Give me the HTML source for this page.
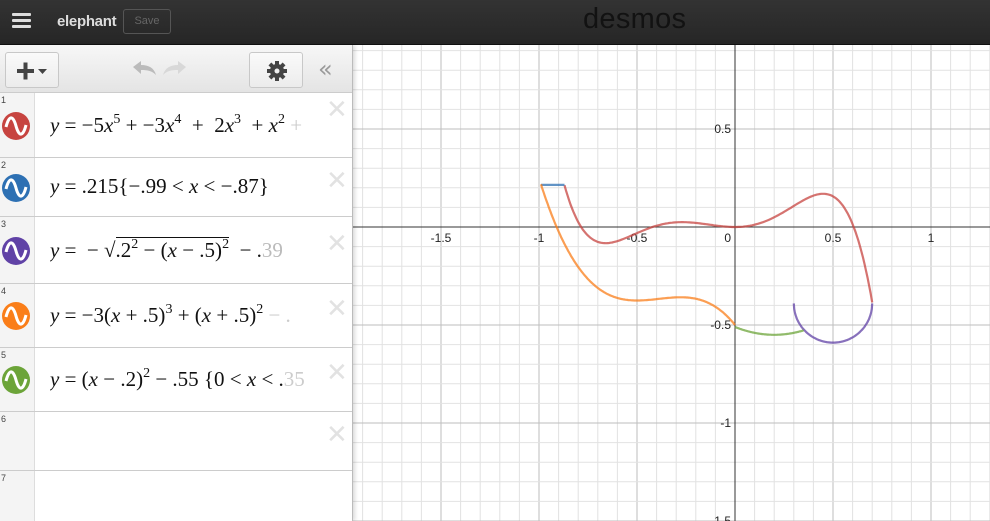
<!DOCTYPE html>
<html><head><meta charset="utf-8"><style>
*{margin:0;padding:0;box-sizing:border-box}
body{width:990px;height:521px;overflow:hidden;background:#fff;font-family:"Liberation Sans",sans-serif;position:relative}
#top{position:absolute;left:0;top:0;width:990px;height:45px;background:linear-gradient(#333,#262626);border-bottom:1px solid #111}
.hb{position:absolute;left:12px;width:19px;height:3px;background:#ddd;border-radius:1px}
#title{position:absolute;left:57px;top:13px;color:#ddd;font-size:15px;font-weight:bold;letter-spacing:-0.3px}
#save{position:absolute;left:123px;top:9px;width:48px;height:25px;border:1px solid #555;border-radius:3px;color:#666;font-size:11px;text-align:center;line-height:23px}
#logo{position:absolute;left:583px;top:3px;font-size:29px;color:#121212;letter-spacing:0.3px}
#panel{position:absolute;left:0;top:45px;width:353px;height:476px;background:#fff;border-right:1px solid #bbb;box-shadow:2px 0 4px rgba(0,0,0,.15);z-index:2;overflow:hidden}
#tb{position:absolute;left:0;top:0;width:352px;height:48px;background:linear-gradient(#f7f7f7,#e4e4e4);border-bottom:1px solid #ccc}
.btn{position:absolute;top:7px;height:36px;border:1px solid #c8c8c8;border-radius:3px;background:linear-gradient(#fafafa,#ececec)}
.row{position:absolute;left:0;width:352px;border-bottom:1px solid #ccc}
.num{position:absolute;left:0;top:0;width:35px;height:100%;background:#f4f4f4;border-right:1px solid #ddd;font-size:9px;color:#444;padding:2px 0 0 1px}
.ic{position:absolute;left:2px;width:28px;height:28px;border-radius:50%}
.ex{position:absolute;left:50px;font-family:"Liberation Serif",serif;font-size:21px;color:#111;white-space:nowrap;width:272px;overflow:hidden}
.ex i{font-style:italic}
.ex sup{font-size:14px;vertical-align:9px}
.x{position:absolute;left:326px;font-size:26px;color:#e2e2e2;font-family:"DejaVu Sans",sans-serif}
#graph{position:absolute;left:0;top:0}
.lab{font-family:"Liberation Sans",sans-serif;font-size:12px;fill:#222}
</style></head><body>
<svg id="graph" width="990" height="521"></svg>
<div id="top">
<div class="hb" style="top:13px"></div><div class="hb" style="top:19px"></div><div class="hb" style="top:25px"></div>
<div id="title">elephant</div><div id="save">Save</div>
<div id="logo">desmos</div>
</div>
<div id="panel">
<div id="tb">
<div class="btn" style="left:5px;width:54px"><svg width="54" height="36"><rect x="11" y="16" width="17" height="4" fill="#444"/><rect x="17.5" y="9.5" width="4" height="17" fill="#444"/><path d="M32 16h9l-4.5 5z" fill="#444"/></svg></div>
<svg style="position:absolute;left:128px;top:12px" width="64" height="24"><path d="M5 10 l8 -6 v4 c8 0 13 3 15 10 c-4 -4 -8 -5 -15 -5 v4z" fill="#bbb"/><path d="M58 10 l-8 -6 v4 c-8 0 -13 3 -15 10 c4 -4 8 -5 15 -5 v4z" fill="#d8d8d8"/></svg>
<div class="btn" style="left:249px;width:54px"><svg width="54" height="36"><g transform="translate(27,18)" fill="#444"><circle r="7"/><g><rect x="-2" y="-10" width="4" height="20"/><rect x="-10" y="-2" width="20" height="4"/><rect x="-2" y="-10" width="4" height="20" transform="rotate(45)"/><rect x="-2" y="-10" width="4" height="20" transform="rotate(-45)"/></g><circle r="2.5" fill="#f0f0f0"/></g></svg></div>
<div style="position:absolute;left:318px;top:10px;font-size:24px;color:#999;font-family:'DejaVu Sans',sans-serif">«</div>
</div>
</div>
<script>
var P=document.getElementById('panel');
var rows=[[48,65,'#c74440','<i>y</i> = −5<i>x</i><sup>5</sup> + −3<i>x</i><sup>4</sup> &nbsp;+ &nbsp;2<i>x</i><sup>3</sup> &nbsp;+ <i>x</i><sup>2</sup> <span style="color:#ccc">+</span>'],
[113,59,'#2d70b3','<i>y</i> = .215{−.99 &lt; <i>x</i> &lt; −.87}'],
[172,67,'#6042a6','<i>y</i> = &nbsp;− √<span style="border-top:1px solid #111">.2<sup>2</sup> − (<i>x</i> − .5)<sup>2</sup></span> &nbsp;− .<span style="color:#bbb">39</span>'],
[239,64,'#fa7e19','<i>y</i> = −3(<i>x</i> + .5)<sup>3</sup> + (<i>x</i> + .5)<sup>2</sup> <span style="color:#ccc">− .</span>'],
[303,64,'#6ca439','<i>y</i> = (<i>x</i> − .2)<sup>2</sup> − .55 {0 &lt; <i>x</i> &lt; .<span style="color:#ccc">35</span>'],
[367,59,null,''],[426,60,null,'']];
var h='';
rows.forEach(function(r,i){
 h+='<div class="row" style="top:'+r[0]+'px;height:'+r[1]+'px"><div class="num">'+(i+1)+'</div>';
 if(r[2]){var cy=(r[1]/2-14);h+='<div class="ic" style="top:'+cy+'px;background:'+r[2]+'"><svg width="28" height="28"><path d="M4 15 C7 3 11 3 14 14 C17 25 21 25 24 13" stroke="#fff" stroke-width="3" fill="none"/></svg></div>';
 h+='<div class="ex" style="top:'+(r[1]/2-14)+'px">'+r[3]+'</div>';}
 if(i<6)h+='<div class="x" style="top:'+(i==0?2:(r[1]/2-22))+'px">✕</div>';
 h+='</div>';
});
P.insertAdjacentHTML('beforeend',h);
var S=document.getElementById('graph'),g='';
var ox=735,oy=227,u=196;
function X(x){return ox+u*x}function Y(y){return oy-u*y}
for(var k=-20;k<=14;k++){var px=X(k/10);if(px<353||px>990)continue;var c=(k%5==0)?'#bdbdbd':'#e2e2e2';g+='<line x1="'+px+'" y1="45" x2="'+px+'" y2="521" stroke="'+c+'"/>';}
for(var k=-16;k<=10;k++){var py=Y(k/10);if(py<45||py>521)continue;var c=(k%5==0)?'#bdbdbd':'#e2e2e2';g+='<line x1="353" y1="'+py+'" x2="990" y2="'+py+'" stroke="'+c+'"/>';}
g+='<line x1="'+ox+'" y1="45" x2="'+ox+'" y2="521" stroke="#333"/><line x1="353" y1="'+oy+'" x2="990" y2="'+oy+'" stroke="#333"/>';
[[-1.5,'-1.5'],[-1,'-1'],[-0.5,'-0.5'],[0.5,'0.5'],[1,'1']].forEach(function(a){g+='<text class="lab" x="'+X(a[0])+'" y="'+(oy+15)+'" text-anchor="middle">'+a[1]+'</text>'});
g+='<text class="lab" x="'+(ox-4)+'" y="'+(oy+15)+'" text-anchor="end">0</text>';
[[0.5,'0.5'],[-0.5,'-0.5'],[-1,'-1'],[-1.5,'-1.5']].forEach(function(a){g+='<text class="lab" x="'+(ox-4)+'" y="'+(Y(a[0])+4)+'" text-anchor="end">'+a[1]+'</text>'});
function curve(f,a,b,col){var d='';for(var i=0;i<=200;i++){var x=a+(b-a)*i/200;d+=(i?'L':'M')+X(x).toFixed(1)+' '+Y(f(x)).toFixed(1);}g+='<path d="'+d+'" stroke="'+col+'" stroke-width="2.2" fill="none" stroke-opacity=".75"/>';}
curve(function(x){return -5*Math.pow(x,5)-3*Math.pow(x,4)+2*x*x*x+x*x},-0.87,0.7,'#c74440');
curve(function(x){return .215},-0.99,-0.87,'#2d70b3');
curve(function(x){return -Math.sqrt(Math.max(0,.04-(x-.5)*(x-.5)))-.39},0.3,0.7,'#6042a6');
curve(function(x){return -3*Math.pow(x+.5,3)+Math.pow(x+.5,2)-.375},-0.99,0,'#fa7e19');
curve(function(x){return (x-.2)*(x-.2)-.55},0,0.35,'#6ca439');
S.innerHTML=g;
</script>
</body></html>
